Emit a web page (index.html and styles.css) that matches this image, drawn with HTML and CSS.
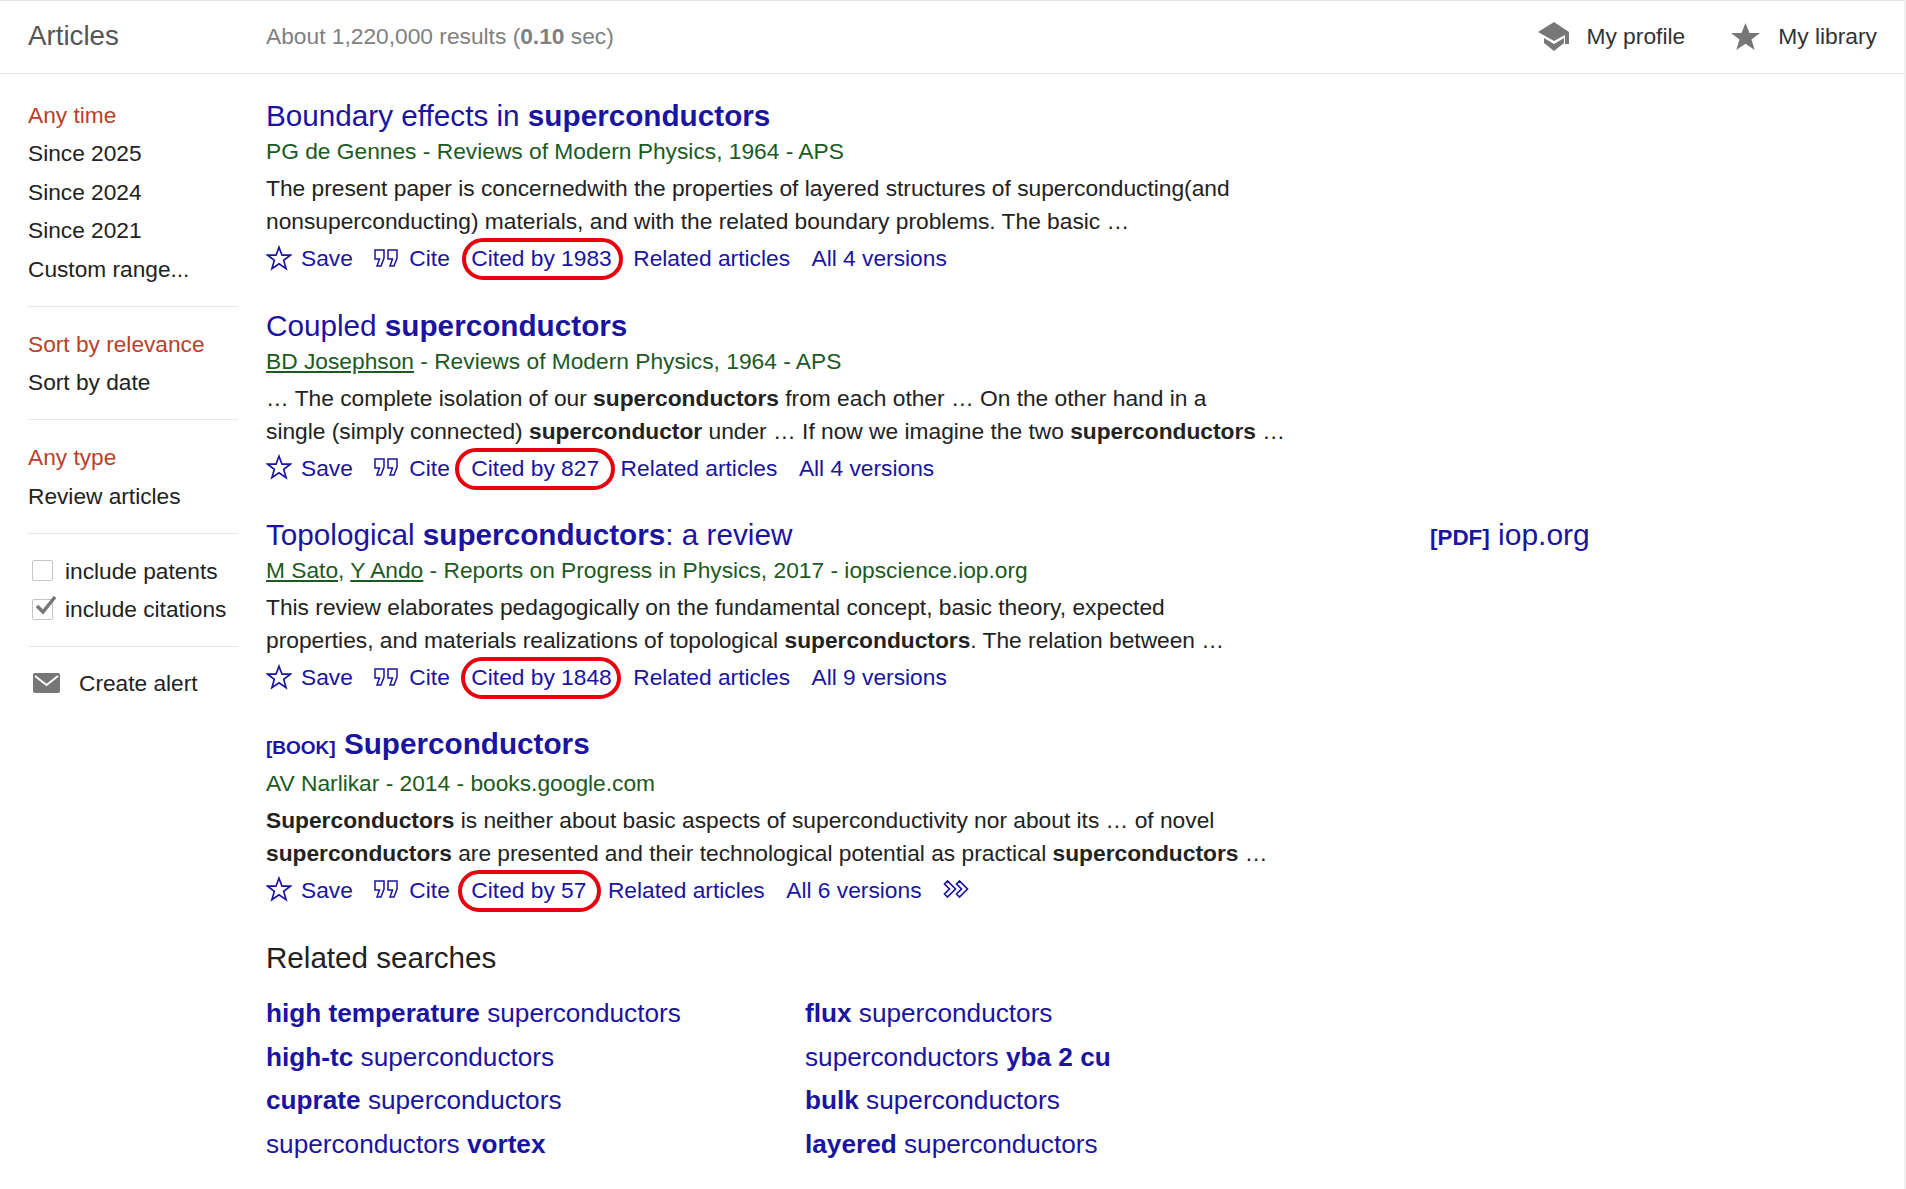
FILE: index.html
```html
<!DOCTYPE html>
<html lang="en">
<head>
<meta charset="utf-8">
<title>Articles</title>
<link rel="stylesheet" href="styles.css">
</head>
<body>
<svg class="defs" width="0" height="0" aria-hidden="true">
  <defs>
    <symbol id="star-line" viewBox="0 0 26 26"><path d="M13 2.200l3 8h8.300l-6.600 5.200 2.400 8.200-7.100-4.800-7.100 4.800 2.400-8.200L1.700 10.200H10z" fill="none" stroke="currentColor" stroke-width="1.700" stroke-linejoin="miter"/></symbol>
    <symbol id="quote" viewBox="0 0 24 18"><path d="M1 1h9v8l-3 8H3l2.500-7H1zM14 1h9v8l-3 8h-4l2.500-7H14z" fill="none" stroke="currentColor" stroke-width="1.500"/></symbol>
  </defs>
</svg>
<header class="topbar">
  <div class="topbar-title">Articles</div>
  <div class="topbar-stats">About 1,220,000 results (<b>0.10</b> sec)</div>
  <nav class="topbar-nav">
    <a class="topbar-link topbar-profile">
      <svg class="icon-cap" viewBox="0 0 32 29"><path d="M16 0L0 10l16 9 11-6v9h4V10zM6 16v5l10 8 10-8v-5l-10 6z" fill="#777"/></svg>
      My profile
    </a>
    <a class="topbar-link">
      <svg class="icon-star-solid" viewBox="0 0 29 27"><path d="M14.500 0l4 10h10.500l-8.500 6.500 3.200 10.500-9.200-6.300L5.300 27l3.200-10.500L0 10h10.500z" fill="#777"/></svg>
      My library
    </a>
  </nav>
</header>
<div class="layout">
  <aside class="sidebar">
    <ul class="side-group">
      <li class="side-active">Any time</li>
      <li>Since 2025</li>
      <li>Since 2024</li>
      <li>Since 2021</li>
      <li>Custom range...</li>
    </ul>
    <ul class="side-group">
      <li class="side-active">Sort by relevance</li>
      <li>Sort by date</li>
    </ul>
    <ul class="side-group">
      <li class="side-active">Any type</li>
      <li>Review articles</li>
    </ul>
    <ul class="side-group">
      <li class="side-check"><span class="checkbox"></span>include patents</li>
      <li class="side-check"><span class="checkbox"><svg class="tick" viewBox="0 0 22 19"><path d="M2 10l6 6L20 1" fill="none" stroke="#777" stroke-width="3.500"/></svg></span>include citations</li>
    </ul>
    <ul class="side-group">
      <li class="side-alert">
        <svg class="icon-mail" viewBox="0 0 27 20"><rect width="27" height="20" rx="2" fill="#777"/><path d="M2 3l11.500 9L25 3" fill="none" stroke="#fff" stroke-width="2"/></svg>
        Create alert
      </li>
    </ul>
  </aside>
  <main class="results">
    <article class="result">
      <div class="result-body">
        <h3 class="result-title">Boundary effects in <b>superconductors</b></h3>
        <div class="result-authors">PG de Gennes - Reviews of Modern Physics, 1964 - APS</div>
        <p class="result-snippet">The present paper is concernedwith the properties of layered structures of superconducting(and<br>nonsuperconducting) materials, and with the related boundary problems. The basic …</p>
        <div class="actions">
          <a class="action"><svg class="icon-star"><use href="#star-line"/></svg>Save</a>
          <a class="action action-cite"><svg class="icon-quote"><use href="#quote"/></svg>Cite</a>
          <a class="cited cited-a">Cited by 1983</a>
          <a>Related articles</a>
          <a>All 4 versions</a>
        </div>
      </div>
    </article>
    <article class="result">
      <div class="result-body">
        <h3 class="result-title">Coupled <b>superconductors</b></h3>
        <div class="result-authors"><u>BD Josephson</u> - Reviews of Modern Physics, 1964 - APS</div>
        <p class="result-snippet">… The complete isolation of our <b>superconductors</b> from each other … On the other hand in a<br>single (simply connected) <b>superconductor</b> under … If now we imagine the two <b>superconductors</b> …</p>
        <div class="actions">
          <a class="action"><svg class="icon-star"><use href="#star-line"/></svg>Save</a>
          <a class="action action-cite"><svg class="icon-quote"><use href="#quote"/></svg>Cite</a>
          <a class="cited cited-b">Cited by 827</a>
          <a>Related articles</a>
          <a>All 4 versions</a>
        </div>
      </div>
    </article>
    <article class="result">
      <div class="result-body">
        <h3 class="result-title">Topological <b>superconductors</b>: a review</h3>
        <div class="result-authors"><u>M Sato</u>, <u>Y Ando</u> - Reports on Progress in Physics, 2017 - iopscience.iop.org</div>
        <p class="result-snippet">This review elaborates pedagogically on the fundamental concept, basic theory, expected<br>properties, and materials realizations of topological <b>superconductors</b>. The relation between …</p>
        <div class="actions">
          <a class="action"><svg class="icon-star"><use href="#star-line"/></svg>Save</a>
          <a class="action action-cite"><svg class="icon-quote"><use href="#quote"/></svg>Cite</a>
          <a class="cited cited-c">Cited by 1848</a>
          <a>Related articles</a>
          <a>All 9 versions</a>
        </div>
      </div>
      <a class="result-side"><b>[PDF]</b> iop.org</a>
    </article>
    <article class="result result-book">
      <div class="result-body">
        <h3 class="result-title"><span class="book-tag">[BOOK]</span> <b>Superconductors</b></h3>
        <div class="result-authors">AV Narlikar - 2014 - books.google.com</div>
        <p class="result-snippet"><b>Superconductors</b> is neither about basic aspects of superconductivity nor about its … of novel<br><b>superconductors</b> are presented and their technological potential as practical <b>superconductors</b> …</p>
        <div class="actions">
          <a class="action"><svg class="icon-star"><use href="#star-line"/></svg>Save</a>
          <a class="action action-cite"><svg class="icon-quote"><use href="#quote"/></svg>Cite</a>
          <a class="cited cited-d">Cited by 57</a>
          <a>Related articles</a>
          <a>All 6 versions</a>
          <svg class="icon-more" viewBox="0 0 25 18"><path d="M1 4l3-3 8 8-8 8-3-3 5-5zM13 4l3-3 8 8-8 8-3-3 5-5z" fill="none" stroke="currentColor" stroke-width="1.700"/></svg>
        </div>
      </div>
    </article>
    <section class="related">
      <h2 class="related-head">Related searches</h2>
      <div class="related-grid">
        <a><b>high temperature</b> superconductors</a>
        <a><b>flux</b> superconductors</a>
        <a><b>high-tc</b> superconductors</a>
        <a>superconductors <b>yba 2 cu</b></a>
        <a><b>cuprate</b> superconductors</a>
        <a><b>bulk</b> superconductors</a>
        <a>superconductors <b>vortex</b></a>
        <a><b>layered</b> superconductors</a>
      </div>
    </section>
  </main>
</div>
</body>
</html>
```
FILE: styles.css
```css
* { box-sizing: border-box; }
html, body { margin: 0; padding: 0; }
body {
  background: #fff;
  color: #222;
  font-family: "Liberation Sans", Arial, sans-serif;
  font-size: 22.750px;
  min-height: 1189px;
  overflow: hidden;
  border-right: 2px solid #f0f0f0;
}
.defs { position: absolute; }
a { color: #1a14a0; }

.topbar {
  display: flex;
  align-items: center;
  height: 74px;
  border-top: 1px solid #e2e2e2;
  border-bottom: 1px solid #e2e2e2;
  padding: 0 27px 2px 28px;
}
.topbar-title { width: 238px; font-size: 27.700px; color: #555; }
.topbar-stats { color: #808080; font-size: 22.750px; }
.topbar-nav { margin-left: auto; display: flex; gap: 46px; }
.topbar-link { display: flex; align-items: center; gap: 18px; color: #333; font-size: 22.800px; }
.topbar-profile { gap: 16px; }
.icon-cap { width: 32px; height: 29px; }
.icon-star-solid { width: 29px; height: 27px; }

.layout { display: flex; gap: 28px; padding-left: 28px; }

.sidebar { width: 210px; flex: none; padding-top: 21.500px; }
.side-group {
  list-style: none;
  margin: 0 0 18px;
  padding: 0 0 17.500px;
  border-bottom: 1px solid #e8e8e8;
  font-size: 22.700px;
  line-height: 38.500px;
}
.side-group:last-child { border-bottom: 0; margin-top: -1px; }
.side-active { color: #b9402a; }
.side-check, .side-alert { display: flex; align-items: center; }
.checkbox {
  position: relative;
  width: 21px;
  height: 21px;
  margin: 0 12px 0 4px;
  border: 1px solid #c4c4c4;
  border-radius: 2px;
}
.tick { position: absolute; left: 2px; top: -4px; width: 22px; height: 19px; }
.icon-mail { width: 27px; height: 20px; margin: 0 19px 0 5px; }

.results { flex: 1; padding-top: 24px; }
.result { display: flex; margin-bottom: 32.500px; }
.result-body { width: 1164px; flex: none; }
.result-title { margin: 0; font-size: 29.700px; font-weight: 400; line-height: 36px; color: #1a14a0; }
.result-authors { color: #1c5a22; font-size: 22.750px; line-height: 34px; }
.result-snippet { margin: 4px 0; font-size: 22.750px; line-height: 33px; color: #222; }
.result-side { font-size: 30px; line-height: 36px; }
.result-side b { font-size: 22.400px; }
.result-book { margin-top: -1px; }
.book-tag { font-size: 19px; font-weight: 700; }

.actions { display: flex; align-items: center; gap: 21.500px; font-size: 22.750px; line-height: 33px; color: #1a14a0; }
.action { display: flex; align-items: center; gap: 9px; }
.action-cite { gap: 11px; }
.icon-star { width: 26px; height: 26px; margin-top: -2px; color: #1a14a0; }
.icon-quote { width: 24px; height: 18px; margin-top: -2px; color: #1a14a0; }
.icon-more { width: 26px; height: 18px; color: #1a14a0; margin-top: -2px; }

.cited { position: relative; }
.cited::after {
  content: "";
  position: absolute;
  top: -4px;
  bottom: -5px;
  border: 4.500px solid #e8000e;
  border-radius: 24px;
}
.cited-a::after { left: -9px; right: -11px; }
.cited-b::after { left: -16px; right: -16px; }
.cited-c::after { left: -10px; right: -9px; }
.cited-d::after { left: -13px; right: -15px; }

.related { margin-top: 33.500px; }
.related-head { margin: 0 0 16px; font-size: 29.600px; font-weight: 400; line-height: 36px; color: #222; }
.related-grid { display: grid; grid-template-columns: 539px 539px; grid-auto-rows: 43.700px; font-size: 26.200px; line-height: 43.700px; }
```
